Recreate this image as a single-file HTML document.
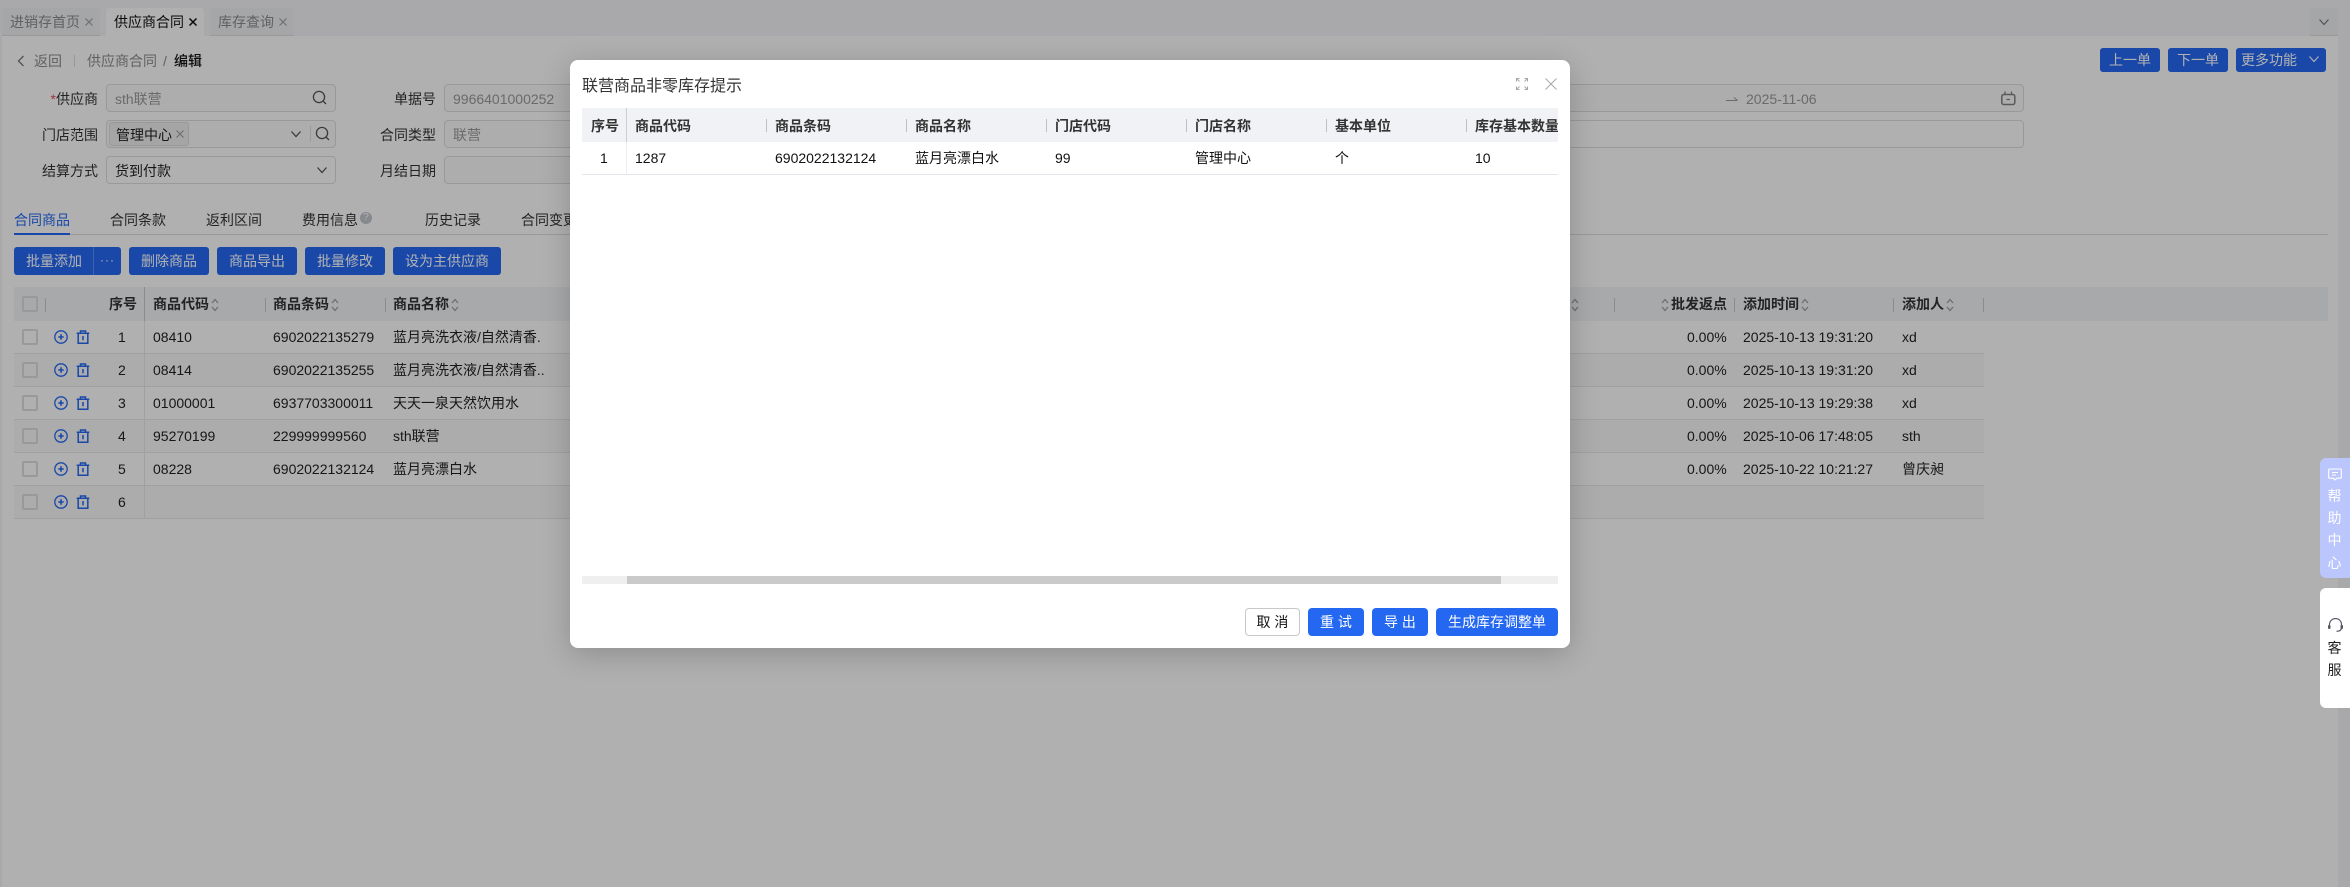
<!DOCTYPE html>
<html lang="zh">
<head>
<meta charset="utf-8">
<title>供应商合同</title>
<style>
*{box-sizing:border-box}
html,body{margin:0;padding:0;width:2350px;height:887px;overflow:hidden;background:#fff;font-family:"Liberation Sans","Noto Sans CJK SC",sans-serif;font-size:14px;color:#222}
.a{position:absolute}
.t{position:absolute;white-space:nowrap;line-height:20px;height:20px}
#page{position:absolute;left:0;top:0;width:2350px;height:887px;background:#f2f3f5;overflow:hidden}
#main{position:absolute;left:2px;top:36px;width:2336px;height:851px;background:#fcfcfc}
.tab{position:absolute;top:8px;height:28px;border-bottom:1px solid #dcdcdc;border-radius:4px 4px 0 0;background:#eceef1;line-height:28px;padding-left:8px;color:#8b8b8b}
.tab.on{background:#fcfcfc;border-bottom:0;color:#111}
.tab svg{position:absolute;top:10px}
.inp{position:absolute;height:28px;border:1px solid #dcdcdc;border-radius:4px;background:#f8f8f8}
.lab{position:absolute;white-space:nowrap;text-align:right;width:90px;line-height:20px;color:#333}
.btn{position:absolute;top:247px;height:28px;background:#2468f2;border-radius:3px;color:#fff;text-align:center;line-height:28px}
.bt2{position:absolute;top:48px;height:24px;background:#2468f2;border-radius:3px;color:#fff;text-align:center;line-height:24px}
.tb{position:absolute;top:210px;line-height:20px;color:#333;white-space:nowrap}
.row{position:absolute;left:14px;width:1970px;height:33px;border-bottom:1px solid #e5e6eb;line-height:33px}
.row.s{background:#f6f6f7}
.row span{position:absolute;white-space:nowrap;top:0;line-height:33px;height:33px}
.cb{position:absolute;left:8px;top:8px;width:16px;height:16px;border:2px solid #dcdcdc;border-radius:2px}
.vd{position:absolute;left:130px;top:0;width:1px;height:33px;background:#e5e6eb}
.row svg{position:absolute;top:9px;width:14px;height:14px}
.pl{left:40px}.tr{left:62px}
.n{left:104px;width:8px}
.c1{left:139px}.c2{left:259px}.c3{left:379px}
.c4{left:1673px;width:39px;text-align:right}
.c5{left:1729px}.c6{left:1888px}
.th{position:absolute;top:294px;line-height:20px;font-weight:700;color:#333;white-space:nowrap}
.sep{position:absolute;top:298px;width:1px;height:14px;background:#c5c8cc}
.sort{position:absolute;top:298px;width:8px;height:14px}
#mask{position:absolute;left:0;top:0;width:2350px;height:887px;background:rgba(0,0,0,.3);z-index:10}
#modal{position:absolute;left:570px;top:60px;width:1000px;height:588px;background:#fff;border-radius:8px;box-shadow:0 6px 30px rgba(0,0,0,.2);z-index:20;overflow:hidden}
.mh{position:absolute;top:8px;line-height:20px;font-weight:700;color:#333;white-space:nowrap}
.ms{position:absolute;top:11px;width:1px;height:13px;background:#bcc0c6}
.mc{position:absolute;top:40px;line-height:20px;color:#111;white-space:nowrap}
.mb{position:absolute;top:548px;height:28px;border-radius:4px;background:#2468f2;color:#fff;text-align:center;line-height:28px}
#help{position:absolute;left:2320px;top:458px;width:30px;height:120px;background:#bac6fc;border-radius:6px 0 0 6px;z-index:30;color:#fff}
#kf{position:absolute;left:2320px;top:588px;width:30px;height:120px;background:#fff;border-radius:6px 0 0 6px;z-index:30;color:#222}
.ch{position:absolute;left:1px;width:27px;text-align:center;line-height:20px}
</style>
</head>
<body>
<svg width="0" height="0" style="position:absolute">
  <symbol id="ip" viewBox="0 0 14 14"><circle cx="7" cy="7" r="6.2" fill="none" stroke="#2468f2" stroke-width="1.3"/><path d="M7 4.300v5.400M4.300 7h5.400" stroke="#2468f2" stroke-width="1.600"/></symbol>
  <symbol id="it" viewBox="0 0 14 14"><path d="M.7 3.300h12.600M2.200 3.300v9.900h9.600V3.300M4.500 3V1h5v2M7 6v4.200" fill="none" stroke="#2468f2" stroke-width="1.500"/></symbol>
  <symbol id="is" viewBox="0 0 8 14"><path d="M1 5l3-3.500L7 5M1 9l3 3.500L7 9" fill="none" stroke="#999" stroke-width="1.200"/></symbol>
</svg>
<div id="page">
  <div id="main"></div>

  <!-- tabs -->
  <div class="tab" style="left:2px;width:98px">进销存首页<svg style="left:83px" width="8" height="8" viewBox="0 0 8 8"><path d="M.5.500l7 7M7.500.500l-7 7" stroke="#a0a0a0" stroke-width="1.200"/></svg></div>
  <div class="tab on" style="left:106px;width:98px">供应商合同<svg style="left:83px" width="8" height="8" viewBox="0 0 8 8"><path d="M.5.500l7 7M7.500.500l-7 7" stroke="#111" stroke-width="1.500"/></svg></div>
  <div class="tab" style="left:210px;width:84px">库存查询<svg style="left:69px" width="8" height="8" viewBox="0 0 8 8"><path d="M.5.500l7 7M7.500.500l-7 7" stroke="#a0a0a0" stroke-width="1.200"/></svg></div>
  <div class="tab" style="left:2310px;width:28px;padding:0">
    <svg style="left:8px;top:9px" width="12" height="10" viewBox="0 0 12 10"><path d="M1.500 2.500 6 7.500l4.500-5" fill="none" stroke="#777" stroke-width="1.200"/></svg>
  </div>

  <!-- breadcrumb -->
  <svg class="a" style="left:16px;top:54px" width="10" height="14" viewBox="0 0 10 14"><path d="M7.500 2 2.500 7l5 5" fill="none" stroke="#777" stroke-width="1.300"/></svg>
  <div class="t" style="left:34px;top:51px;color:#8b8b8b">返回</div>
  <div class="a" style="left:74px;top:55px;width:1px;height:12px;background:#dcdcdc"></div>
  <div class="t" style="left:87px;top:51px;color:#8b8b8b">供应商合同</div>
  <div class="t" style="left:163px;top:51px;color:#8b8b8b">/</div>
  <div class="t" style="left:174px;top:51px;color:#111;font-weight:500">编辑</div>

  <!-- top right buttons -->
  <div class="bt2" style="left:2100px;width:60px">上一单</div>
  <div class="bt2" style="left:2168px;width:60px">下一单</div>
  <div class="bt2" style="left:2236px;width:90px;text-align:left;padding-left:5px">更多功能
    <svg class="a" style="left:72px;top:6px" width="12" height="10" viewBox="0 0 12 10"><path d="M1.500 2.500 6 7.500l4.500-5" fill="none" stroke="#fff" stroke-width="1.100"/></svg>
  </div>

  <!-- form -->
  <div class="lab" style="left:8px;top:89px"><span style="color:#e34d59">*</span>供应商</div>
  <div class="inp" style="left:106px;top:84px;width:230px"></div>
  <div class="t" style="left:115px;top:89px;color:#999">sth联营</div>
  <svg class="a" style="left:312px;top:90px" width="16" height="16" viewBox="0 0 16 16"><circle cx="7" cy="7" r="5.600" fill="none" stroke="#555" stroke-width="1.300"/><path d="M11 11l3 3" stroke="#555" stroke-width="1.300"/></svg>

  <div class="lab" style="left:8px;top:125px">门店范围</div>
  <div class="inp" style="left:106px;top:120px;width:230px"></div>
  <div class="a" style="left:109px;top:122px;width:80px;height:24px;background:#ececec;border:1px solid #dcdcdc;border-radius:3px"></div>
  <div class="t" style="left:116px;top:125px;color:#222">管理中心</div>
  <svg class="a" style="left:175px;top:129px" width="10" height="10" viewBox="0 0 10 10"><path d="M1.500 1.500l7 7M8.500 1.500l-7 7" stroke="#999" stroke-width="1"/></svg>
  <svg class="a" style="left:290px;top:129px" width="12" height="10" viewBox="0 0 12 10"><path d="M1.500 2.500 6 7.500l4.500-5" fill="none" stroke="#555" stroke-width="1.300"/></svg>
  <div class="a" style="left:310px;top:126px;width:1px;height:16px;background:#dcdcdc"></div>
  <svg class="a" style="left:315px;top:126px" width="16" height="16" viewBox="0 0 16 16"><circle cx="7" cy="7" r="5.600" fill="none" stroke="#555" stroke-width="1.300"/><path d="M11 11l3 3" stroke="#555" stroke-width="1.300"/></svg>

  <div class="lab" style="left:8px;top:161px">结算方式</div>
  <div class="inp" style="left:106px;top:156px;width:230px;background:#fcfcfc"></div>
  <div class="t" style="left:115px;top:161px;color:#222">货到付款</div>
  <svg class="a" style="left:316px;top:165px" width="12" height="10" viewBox="0 0 12 10"><path d="M1.500 2.500 6 7.500l4.500-5" fill="none" stroke="#555" stroke-width="1.300"/></svg>

  <div class="lab" style="left:346px;top:89px">单据号</div>
  <div class="inp" style="left:444px;top:84px;width:230px"></div>
  <div class="t" style="left:453px;top:89px;color:#999">9966401000252</div>
  <div class="lab" style="left:346px;top:125px">合同类型</div>
  <div class="inp" style="left:444px;top:120px;width:230px"></div>
  <div class="t" style="left:453px;top:125px;color:#999">联营</div>
  <div class="lab" style="left:346px;top:161px">月结日期</div>
  <div class="inp" style="left:444px;top:156px;width:230px"></div>

  <div class="inp" style="left:1400px;top:84px;width:624px"></div>
  <svg class="a" style="left:1725px;top:95px" width="14" height="8" viewBox="0 0 14 8"><path d="M1 5.500h11.500M12.500 5.500 9 2.500" fill="none" stroke="#999" stroke-width="1"/></svg>
  <div class="t" style="left:1746px;top:89px;color:#999">2025-11-06</div>
  <svg class="a" style="left:2001px;top:90px" width="15" height="16" viewBox="0 0 15 16"><rect x=".8" y="4.500" width="13" height="10" rx="2" fill="none" stroke="#808080" stroke-width="1.500"/><path d="M4 1.500v3M10.500 1.500v3M5.500 9.500h3.500" fill="none" stroke="#808080" stroke-width="1.300"/></svg>
  <div class="inp" style="left:1400px;top:120px;width:624px;background:#fcfcfc"></div>

  <!-- sub tabs -->
  <div class="tb" style="left:14px;color:#2468f2">合同商品</div>
  <div class="tb" style="left:110px">合同条款</div>
  <div class="tb" style="left:206px">返利区间</div>
  <div class="tb" style="left:302px">费用信息</div>
  <div class="a" style="left:360px;top:212px;width:12px;height:12px;border-radius:50%;background:#c0c4cc;color:#fff;font-size:10px;line-height:12px;text-align:center">?</div>
  <div class="tb" style="left:425px">历史记录</div>
  <div class="tb" style="left:521px">合同变更</div>
  <div class="a" style="left:14px;top:234px;width:2314px;height:1px;background:#dcdcdc"></div>
  <div class="a" style="left:14px;top:233px;width:56px;height:2px;background:#2468f2"></div>

  <!-- action buttons -->
  <div class="btn" style="left:14px;width:107px;text-align:left;padding-left:12px">批量添加
    <div class="a" style="left:79px;top:0;width:1px;height:28px;background:#5a8cf5"></div>
    <div class="a" style="left:86px;top:-1px;letter-spacing:1px;font-size:12px">···</div>
  </div>
  <div class="btn" style="left:129px;width:80px">删除商品</div>
  <div class="btn" style="left:217px;width:80px">商品导出</div>
  <div class="btn" style="left:305px;width:80px">批量修改</div>
  <div class="btn" style="left:393px;width:108px">设为主供应商</div>

  <!-- table header -->
  <div class="a" style="left:14px;top:287px;width:2314px;height:34px;background:#f0f2f5"></div>
  <div class="a" style="left:22px;top:296px;width:16px;height:16px;border:2px solid #dcdcdc;border-radius:2px"></div>
  <div class="sep" style="left:45px"></div>
  <div class="th" style="left:109px">序号</div>
  <div class="a" style="left:144px;top:287px;width:1px;height:34px;background:#c5c8cc"></div>
  <div class="th" style="left:153px">商品代码</div>
  <svg class="sort" style="left:211px"><use href="#is"/></svg>
  <div class="sep" style="left:265px"></div>
  <div class="th" style="left:273px">商品条码</div>
  <svg class="sort" style="left:331px"><use href="#is"/></svg>
  <div class="sep" style="left:385px"></div>
  <div class="th" style="left:393px">商品名称</div>
  <svg class="sort" style="left:451px"><use href="#is"/></svg>
  <svg class="sort" style="left:1571px"><use href="#is"/></svg>
  <div class="sep" style="left:1614px"></div>
  <svg class="sort" style="left:1661px"><use href="#is"/></svg>
  <div class="th" style="left:1671px">批发返点</div>
  <div class="sep" style="left:1734px"></div>
  <div class="th" style="left:1743px">添加时间</div>
  <svg class="sort" style="left:1801px"><use href="#is"/></svg>
  <div class="sep" style="left:1893px"></div>
  <div class="th" style="left:1902px">添加人</div>
  <svg class="sort" style="left:1946px"><use href="#is"/></svg>
  <div class="sep" style="left:1983px"></div>

  <!-- rows -->
  <div class="row" style="top:321px"><div class="cb"></div><svg class="pl"><use href="#ip"/></svg><svg class="tr"><use href="#it"/></svg><span class="n">1</span><div class="vd"></div><span class="c1">08410</span><span class="c2">6902022135279</span><span class="c3">蓝月亮洗衣液/自然清香.</span><span class="c4">0.00%</span><span class="c5">2025-10-13 19:31:20</span><span class="c6">xd</span></div>

  <div class="row s" style="top:354px"><div class="cb"></div><svg class="pl"><use href="#ip"/></svg><svg class="tr"><use href="#it"/></svg><span class="n">2</span><div class="vd"></div><span class="c1">08414</span><span class="c2">6902022135255</span><span class="c3">蓝月亮洗衣液/自然清香..</span><span class="c4">0.00%</span><span class="c5">2025-10-13 19:31:20</span><span class="c6">xd</span></div>

  <div class="row" style="top:387px"><div class="cb"></div><svg class="pl"><use href="#ip"/></svg><svg class="tr"><use href="#it"/></svg><span class="n">3</span><div class="vd"></div><span class="c1">01000001</span><span class="c2">6937703300011</span><span class="c3">天天一泉天然饮用水</span><span class="c4">0.00%</span><span class="c5">2025-10-13 19:29:38</span><span class="c6">xd</span></div>

  <div class="row s" style="top:420px"><div class="cb"></div><svg class="pl"><use href="#ip"/></svg><svg class="tr"><use href="#it"/></svg><span class="n">4</span><div class="vd"></div><span class="c1">95270199</span><span class="c2">229999999560</span><span class="c3">sth联营</span><span class="c4">0.00%</span><span class="c5">2025-10-06 17:48:05</span><span class="c6">sth</span></div>

  <div class="row" style="top:453px"><div class="cb"></div><svg class="pl"><use href="#ip"/></svg><svg class="tr"><use href="#it"/></svg><span class="n">5</span><div class="vd"></div><span class="c1">08228</span><span class="c2">6902022132124</span><span class="c3">蓝月亮漂白水</span><span class="c4">0.00%</span><span class="c5">2025-10-22 10:21:27</span><span class="c6">曾庆昶</span></div>

  <div class="row s" style="top:486px"><div class="cb"></div><svg class="pl"><use href="#ip"/></svg><svg class="tr"><use href="#it"/></svg><span class="n">6</span><div class="vd"></div></div>
</div>

<div id="mask"></div>

<div id="modal">
  <div class="t" style="left:12px;top:17px;font-size:16px;line-height:20px;color:#333">联营商品非零库存提示</div>
  <svg class="a" style="left:946px;top:18px" width="12" height="12" viewBox="0 0 12 12"><path d="M.5 3.500v-3h3M8.500 .5h3v3M11.500 8.500v3h-3M3.500 11.500h-3v-3M1 1l2.500 2.500M11 1 8.500 3.500M11 11 8.500 8.500M1 11l2.500-2.500" fill="none" stroke="#a8a8a8" stroke-width="1"/></svg>
  <svg class="a" style="left:975px;top:18px" width="12" height="12" viewBox="0 0 12 12"><path d="M.5.500l11 11M11.500.500l-11 11" stroke="#a8a8a8" stroke-width="1"/></svg>

  <div class="a" style="left:12px;top:48px;width:976px;height:127px;overflow:hidden">
    <div class="a" style="left:0;top:0;width:976px;height:34px;background:#f0f2f5"></div>
    <div class="mh" style="left:9px">序号</div>
    <div class="a" style="left:44px;top:0;width:1px;height:34px;background:#ccced3"></div>
    <div class="mh" style="left:53px">商品代码</div>
    <div class="ms" style="left:184px"></div>
    <div class="mh" style="left:193px">商品条码</div>
    <div class="ms" style="left:324px"></div>
    <div class="mh" style="left:333px">商品名称</div>
    <div class="ms" style="left:464px"></div>
    <div class="mh" style="left:473px">门店代码</div>
    <div class="ms" style="left:604px"></div>
    <div class="mh" style="left:613px">门店名称</div>
    <div class="ms" style="left:744px"></div>
    <div class="mh" style="left:753px">基本单位</div>
    <div class="ms" style="left:884px"></div>
    <div class="mh" style="left:893px">库存基本数量</div>
    <div class="a" style="left:44px;top:34px;width:1px;height:32px;background:#eceef1"></div>
    <div class="a" style="left:0;top:66px;width:976px;height:1px;background:#e5e6eb"></div>
    <div class="mc" style="left:18px">1</div>
    <div class="mc" style="left:53px">1287</div>
    <div class="mc" style="left:193px">6902022132124</div>
    <div class="mc" style="left:333px">蓝月亮漂白水</div>
    <div class="mc" style="left:473px">99</div>
    <div class="mc" style="left:613px">管理中心</div>
    <div class="mc" style="left:753px">个</div>
    <div class="mc" style="left:893px">10</div>
  </div>

  <div class="a" style="left:12px;top:516px;width:976px;height:8px;background:#efefef"></div>
  <div class="a" style="left:57px;top:516px;width:874px;height:8px;background:#cacaca"></div>

  <div class="mb" style="left:675px;width:55px;background:#fff;border:1px solid #c8c8c8;color:#111;line-height:26px">取 消</div>
  <div class="mb" style="left:738px;width:56px">重 试</div>
  <div class="mb" style="left:802px;width:56px">导 出</div>
  <div class="mb" style="left:866px;width:122px">生成库存调整单</div>
</div>

<div id="help">
  <svg class="a" style="left:8px;top:10px" width="14" height="13" viewBox="0 0 14 13"><path d="M1.500 1h11a.8.8 0 0 1 .8.8v7.600a.8.8 0 0 1-.8.8H8.800L7 12 5.200 10.200H1.500a.8.8 0 0 1-.8-.8V1.800A.8.8 0 0 1 1.500 1zM4 4.500h6M4 7h4" fill="none" stroke="#fff" stroke-width="1.100"/></svg>
  <div class="ch" style="top:28px">帮</div>
  <div class="ch" style="top:50px">助</div>
  <div class="ch" style="top:72px">中</div>
  <div class="ch" style="top:95px">心</div>
</div>
<div id="kf">
  <svg class="a" style="left:7px;top:30px" width="17" height="15" viewBox="0 0 17 15"><path d="M2.500 8V6.500a6 6 0 0 1 12 0V8M14.500 9.500c0 2.500-2 3.800-5 3.800" fill="none" stroke="#5a5a66" stroke-width="1.200"/><rect x="1" y="7" width="2.500" height="4" rx="1" fill="#5a5a66"/><rect x="13.500" y="7" width="2.500" height="4" rx="1" fill="#5a5a66"/></svg>
  <div class="ch" style="top:50px">客</div>
  <div class="ch" style="top:72px">服</div>
</div>
</body>
</html>
